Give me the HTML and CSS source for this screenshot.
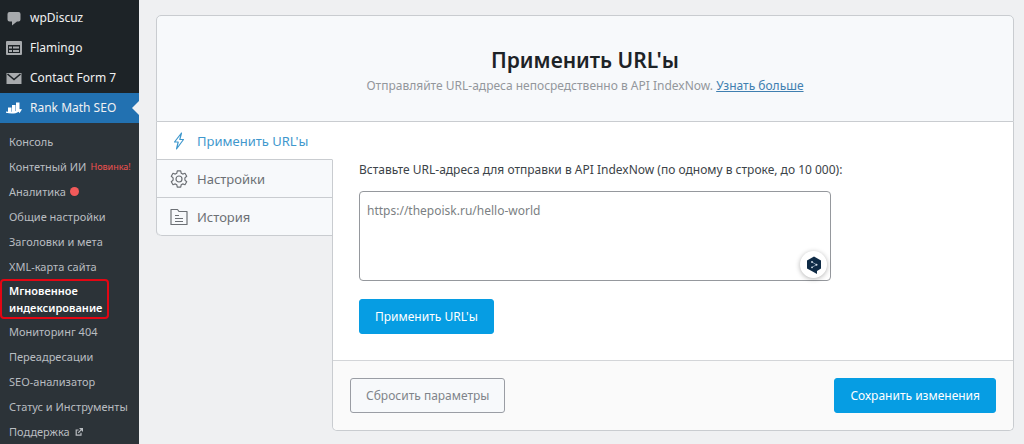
FILE: index.html
```html
<!DOCTYPE html>
<html lang="ru">
<head>
<meta charset="utf-8">
<meta name="viewport" content="width=device-width, initial-scale=1">
<title>Мгновенное индексирование</title>
<link rel="stylesheet" href="styles.css">
</head>
<body>
<div class="admin">
  <nav class="sidebar" aria-label="Главное меню">
    <ul class="menu">
      <li><a class="menu-link" href="#"><svg class="menu-icon" viewBox="0 0 16 16"><path fill="currentColor" d="M3.500 2h9q2 0 2 2v5.500q0 2-2 2H11l-5 4v-4H3.500q-2 0-2-2V4q0-2 2-2z"/></svg>wpDiscuz</a></li>
      <li><a class="menu-link" href="#"><svg class="menu-icon" viewBox="0 0 16 16"><path fill="currentColor" fill-rule="evenodd" d="M1 1h14a1 1 0 0 1 1 1v12a1 1 0 0 1-1 1H1a1 1 0 0 1-1-1V2a1 1 0 0 1 1-1zM2 5v8h12V5z"/><path fill="currentColor" d="M3 6.500h3v2H3zM7 6.500h6v2H7zM3 10h3v2H3zM7 10h6v2H7z"/></svg>Flamingo</a></li>
      <li><a class="menu-link" href="#"><svg class="menu-icon" viewBox="0 0 16 16"><path fill="currentColor" d="M.5 3h15v11H.5z"/><path fill="none" stroke="#1d2327" stroke-width="1.6" d="M1.500 4 8 9.500 14.500 4"/></svg>Contact Form 7</a></li>
      <li><a class="menu-link menu-link-current" href="#"><svg class="menu-icon" viewBox="0 0 16 16"><path fill="currentColor" d="M2 7.500h3.500V12H2zM6 5h3.500v7H6zM10 2.500h3.500V10L10 12z"/><path fill="currentColor" d="M0 11.500c4 .6 8 .4 11.500-1.200L11 9l5 .3-2.500 4-.8-1.500C9.500 14 4.500 14 0 12.800z"/></svg>Rank Math SEO</a></li>
    </ul>
    <ul class="submenu">
      <li><a href="#">Консоль</a></li>
      <li><a href="#">Контетный ИИ <span class="new">Новинка!</span></a></li>
      <li><a href="#">Аналитика <span class="dot"></span></a></li>
      <li><a href="#">Общие настройки</a></li>
      <li><a href="#">Заголовки и мета</a></li>
      <li><a href="#">XML-карта сайта</a></li>
      <li class="current"><a href="#">Мгновенное индексирование</a></li>
      <li><a href="#">Мониторинг 404</a></li>
      <li><a href="#">Переадресации</a></li>
      <li><a href="#">SEO-анализатор</a></li>
      <li><a href="#">Статус и Инструменты</a></li>
      <li><a href="#">Поддержка <svg class="external" viewBox="0 0 10 10"><path fill="none" stroke="currentColor" stroke-width="1.500" d="M4.500 2.500H1.500v6.500h6V6M4 6l4-4"/><path fill="currentColor" d="M5 0h5v5z"/></svg></a></li>
    </ul>
  </nav>

  <main class="content">
    <header class="head">
      <h1>Применить URL'ы</h1>
      <p>Отправляйте URL-адреса непосредственно в API IndexNow. <a href="#">Узнать больше</a></p>
    </header>
    <div class="body">
      <nav class="tabs" aria-label="Разделы">
        <a class="tab tab-active" href="#"><svg class="tab-icon" viewBox="0 0 18 18"><path d="M11.500 1 4.500 10h3.700L6.500 17l7-9.500H9.800z"/></svg>Применить URL'ы</a>
        <a class="tab" href="#"><svg class="tab-icon" viewBox="0 0 18 18"><path d="M7.300.9h3.400l.5 2.300 1.500.9 2.300-.8 1.700 2.900-1.800 1.700v2.200l1.800 1.700-1.700 2.900-2.300-.8-1.500.9-.5 2.300H7.300l-.5-2.300-1.500-.9-2.300.8-1.700-2.900 1.800-1.700V7.900L1.300 6.200 3 3.300l2.300.8 1.500-.9z"/><circle cx="9" cy="9" r="3"/></svg>Настройки</a>
        <a class="tab" href="#"><svg class="tab-icon" viewBox="0 0 18 18"><path d="M1 16.500v-15h6.500l1.500 2h8v13zM5 7.500h4M5 10.500h8M5 13.500h8"/></svg>История</a>
      </nav>
      <form class="panel">
        <div class="fields">
          <label for="urls">Вставьте URL-адреса для отправки в API IndexNow (по одному в строке, до 10 000):</label>
          <div class="editor">
            <textarea id="urls" placeholder="https://thepoisk.ru/hello-world"></textarea>
            <button class="helper" type="button" aria-label="Перевести"><svg viewBox="0 0 16 18"><path fill="#0f2b46" d="m8 .5 7 4v8L11 15v3l-4-2.300-6-3.200v-8z"/><path fill="none" stroke="#8fa6bd" stroke-width=".8" d="m6 6 4.500 2.700L6 11.300"/><g fill="#dbe4ec"><circle cx="6" cy="6" r=".9"/><circle cx="10.500" cy="8.700" r="1"/><circle cx="6" cy="11.300" r=".9"/></g></svg></button>
          </div>
          <button class="button primary" type="button">Применить URL'ы</button>
        </div>
        <footer class="actions">
          <button class="button secondary" type="reset">Сбросить параметры</button>
          <button class="button primary" type="submit">Сохранить изменения</button>
        </footer>
      </form>
    </div>
  </main>
</div>
</body>
</html>
```

FILE: styles.css
```css
* {
  box-sizing: border-box;
}

body {
  margin: 0;
  background: #eff0f2;
  color: #3c4348;
  font: 12px/20px "Noto Sans", "Open Sans", sans-serif;
}

button,
textarea {
  font: inherit;
}

.admin {
  display: flex;
  min-height: 100vh;
}

.sidebar {
  flex: 0 0 139px;
  background: #2c3338;
}

.menu,
.submenu {
  margin: 0;
  padding: 0;
  list-style: none;
}

.menu {
  padding-top: 3px;
  background: #1d2327;
}

.menu-link {
  position: relative;
  display: flex;
  align-items: center;
  gap: 8px;
  height: 30px;
  padding-left: 6px;
  color: #f0f0f1;
  text-decoration: none;
  white-space: nowrap;
}

.menu-icon {
  width: 16px;
  height: 16px;
  color: #a7aaad;
}

.menu-link-current {
  background: #2271b1;
}

.menu-link-current .menu-icon {
  color: #fff;
}

.menu-link-current::after {
  content: "";
  position: absolute;
  right: 0;
  top: 8px;
  border: 7px solid transparent;
  border-left: 0;
  border-right-color: #eff0f2;
}

.submenu {
  padding-top: 6px;
}

.submenu a {
  display: flex;
  align-items: center;
  gap: 4px;
  height: 25px;
  padding-left: 9px;
  color: #b9bdc1;
  font-size: 11px;
  text-decoration: none;
  white-space: nowrap;
}

.new {
  color: #f0514f;
  font-size: 9px;
}

.dot {
  width: 9px;
  height: 9px;
  border-radius: 50%;
  background: #f25a5a;
}

.external {
  width: 8px;
  height: 8px;
  margin-left: 1px;
}

.submenu .current a {
  height: 40px;
  width: 109px;
  padding-left: 7px;
  border: 2px solid #e30613;
  border-radius: 4px;
  color: #fff;
  font-weight: 600;
  line-height: 17px;
  white-space: normal;
}

.content {
  flex: 1;
  min-width: 0;
  padding: 15px 10px 12px 17px;
}

.head {
  padding: 29px 20px 24px;
  border: 1px solid #c9ccd0;
  border-radius: 5px 5px 0 0;
  background: #f7f9fb;
  text-align: center;
}

.head h1 {
  margin: 0;
  color: #1d2327;
  font-size: 21px;
  font-weight: 600;
  line-height: 30px;
}

.head p {
  margin: 0;
  line-height: 22px;
  color: #93979c;
}

.head a {
  color: #3f7fb0;
}

.body {
  display: flex;
  align-items: flex-start;
}

.tabs {
  position: relative;
  flex: 0 0 177px;
  border-left: 1px solid #c9ccd0;
  border-radius: 0 0 0 5px;
  overflow: hidden;
}

.tab {
  display: flex;
  align-items: center;
  gap: 9px;
  height: 38px;
  padding-left: 13px;
  border-right: 1px solid #c9ccd0;
  border-bottom: 1px solid #c9ccd0;
  background: #f7f9fb;
  color: #6c7075;
  font-size: 13px;
  text-decoration: none;
}

.tab:last-child {
  border-bottom-left-radius: 5px;
}

.tab-active {
  border-right-color: #fff;
  background: #fff;
  color: #3f98cd;
}

.tab-icon {
  width: 18px;
  height: 18px;
  fill: none;
  stroke: currentColor;
  stroke-width: 1.2;
  stroke-linejoin: round;
}

.panel {
  flex: 1;
  min-width: 0;
  margin-left: -1px;
  border: 1px solid #c9ccd0;
  border-top: 0;
  border-radius: 0 0 5px 5px;
  background: #fff;
}

.fields {
  padding: 38px 26px 26px;
}

.fields label {
  display: block;
  margin-bottom: 11px;
}

.editor {
  position: relative;
  max-width: 472px;
  margin-bottom: 18px;
}

.editor textarea {
  display: block;
  width: 100%;
  height: 90px;
  padding: 9px 7px;
  border: 1px solid #95989d;
  border-radius: 4px;
  background: #fff;
  color: #3c4348;
  resize: none;
}

.editor textarea::placeholder {
  color: #7b7f83;
}

.helper {
  position: absolute;
  right: 4px;
  bottom: 3px;
  display: grid;
  place-items: center;
  width: 27px;
  height: 27px;
  padding: 0;
  border: 0;
  border-radius: 50%;
  background: #fff;
  box-shadow: 0 1px 5px rgb(0 0 0 / 30%);
}

.helper svg {
  width: 16px;
  height: 18px;
}

.button {
  height: 35px;
  padding: 0 15px;
  border: 1px solid #069de3;
  border-radius: 3px;
  white-space: nowrap;
}

.primary {
  background: #069de3;
  color: #fff;
}

.secondary {
  border-color: #9a9da4;
  background: #f7f9fb;
  color: #80848a;
}

.actions {
  display: flex;
  justify-content: space-between;
  padding: 17px;
  border-top: 1px solid #d3d5d8;
  border-radius: 0 0 5px 5px;
  background: #fafafa;
}
```
